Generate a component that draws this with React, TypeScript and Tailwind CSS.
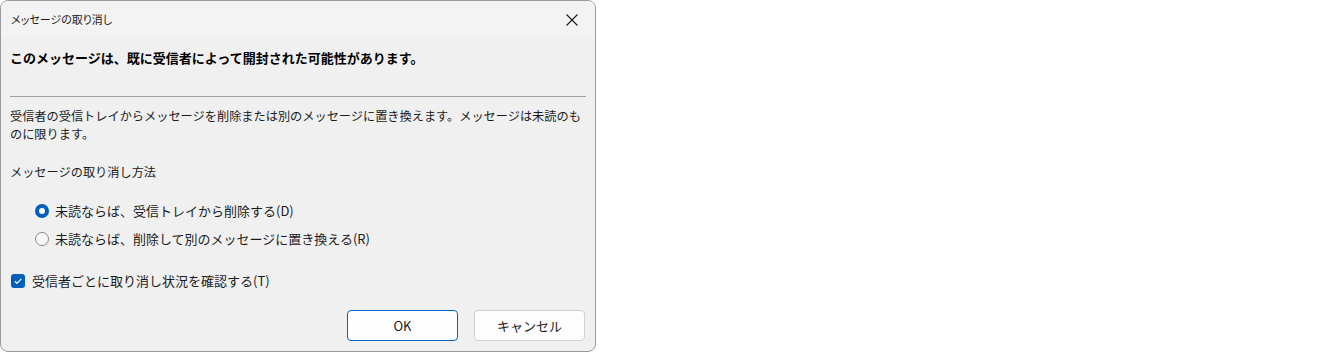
import React from "react";

const font = "font-['Yu_Gothic_UI','Noto_Sans_CJK_JP',sans-serif]";

function Radio({ checked }: { checked: boolean }) {
  return checked ? (
    <span className="flex h-[14px] w-[14px] items-center justify-center rounded-full bg-[#005fb8]">
      <span className="h-[6px] w-[6px] rounded-full bg-white" />
    </span>
  ) : (
    <span className="h-[14px] w-[14px] rounded-full border border-[#8a8a8a] bg-[#f7f7f7]" />
  );
}

export default function App() {
  return (
    <div className={`w-[1344px] h-[354px] bg-white ${font} text-[12.2px] text-[#1b1b1b]`}>
      <div className="flex h-[352px] w-[596px] flex-col overflow-hidden rounded-[8px] border border-[#9a9a9a] bg-[#f0f0f0]">
        <div className="flex h-[37px] shrink-0 items-center justify-between bg-[#f3f3f3] pl-[10px] pr-[14px]">
          <span className="text-[11px] text-[#1b1b1b] [font-feature-settings:'palt']">メッセージの取り消し</span>
          <svg width="14" height="14" viewBox="0 0 14 14" className="mr-[2px]">
            <path d="M1.5 1.5 L12.5 12.5 M12.5 1.5 L1.5 12.5" stroke="#1b1b1b" strokeWidth="1.1" fill="none" />
          </svg>
        </div>
        <div className="flex flex-1 flex-col px-[9px]">
          <div className="mt-[11px] text-[13px] font-bold leading-[18px] text-black">
            このメッセージは、既に受信者によって開封された可能性があります。
          </div>
          <div className="mt-[29px] h-px bg-[#a0a0a0]" />
          <p className="mt-[10px] leading-[18px]">
            受信者の受信トレイからメッセージを削除または別のメッセージに置き換えます。メッセージは未読のものに限ります。
          </p>
          <div className="mt-[20px] leading-[18px]">メッセージの取り消し方法</div>
          <div className="mt-[21px] flex flex-col gap-[10px] pl-[25px] text-[13px]">
            <label className="flex items-center gap-[6px] leading-[18px]">
              <Radio checked />
              <span>未読ならば、受信トレイから削除する(D)</span>
            </label>
            <label className="flex items-center gap-[6px] leading-[18px]">
              <Radio checked={false} />
              <span>未読ならば、削除して別のメッセージに置き換える(R)</span>
            </label>
          </div>
          <label className="mt-[24px] flex items-center gap-[7px] pl-px text-[13px] leading-[18px]">
            <span className="flex h-[14px] w-[14px] items-center justify-center rounded-[3px] bg-[#005fb8]">
              <svg width="10" height="10" viewBox="0 0 10 10">
                <path d="M1.8 5.2 L4 7.3 L8.3 2.8" stroke="white" strokeWidth="1.2" fill="none" />
              </svg>
            </span>
            <span>受信者ごとに取り消し状況を確認する(T)</span>
          </label>
          <div className="mt-[20px] flex justify-end gap-[16px] pr-px">
            <button className="h-[31px] w-[111px] rounded-[4px] border border-[#0067c0] bg-[#fdfdfd] text-[13px] text-[#1b1b1b]">
              OK
            </button>
            <button className="h-[31px] w-[111px] rounded-[4px] border border-[#d0d0d0] bg-[#fdfdfd] text-[13px] text-[#1b1b1b]">
              キャンセル
            </button>
          </div>
        </div>
      </div>
    </div>
  );
}
